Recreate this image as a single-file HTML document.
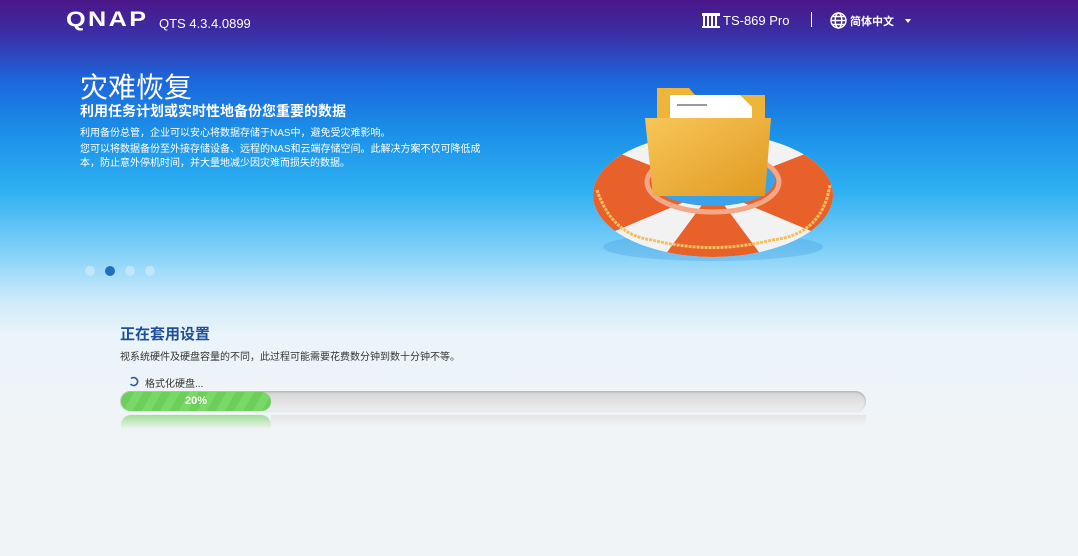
<!DOCTYPE html>
<html><head><meta charset="utf-8"><style>
*{margin:0;padding:0;box-sizing:border-box}
body{width:1078px;height:556px;overflow:hidden;position:relative;font-family:"Liberation Sans","Noto Sans CJK SC",sans-serif;
background:linear-gradient(180deg,#4b1688 0px,#3a2fa6 35px,#1c66dc 80px,#1b8ee8 130px,#2eb0f2 190px,#7fd0f8 250px,#cdeafb 300px,#eaf4fa 335px,#f0f4f7 420px,#f1f4f6 556px);}
.a{position:absolute;color:#fff;white-space:nowrap}
</style></head><body>
<div class="a" style="left:66px;top:8px;font:900 21px 'Liberation Sans',sans-serif;letter-spacing:2px;transform:scaleX(1.2);transform-origin:left">QNAP</div>
<div class="a" style="left:159px;top:16px;font-size:13px">QTS 4.3.4.0899</div>
<svg class="a" style="left:702px;top:13px" width="18" height="15" viewBox="0 0 18 15"><rect x="0" y="0" width="18" height="3" fill="#fff"/><rect x="1" y="3" width="2" height="12" fill="#fff"/><rect x="5" y="3" width="2" height="12" fill="#fff"/><rect x="9" y="3" width="2" height="12" fill="#fff"/><rect x="13" y="3" width="2" height="12" fill="#fff"/><rect x="0" y="13" width="18" height="2" fill="#fff"/></svg>
<div class="a" style="left:723px;top:13px;font-size:13px">TS-869 Pro</div>
<div class="a" style="left:811px;top:12px;width:1px;height:15px;background:#fff"></div>
<svg class="a" style="left:830px;top:12px" width="17" height="17" viewBox="0 0 17 17" fill="none" stroke="#fff" stroke-width="1.4"><circle cx="8.5" cy="8.5" r="7.5"/><ellipse cx="8.5" cy="8.5" rx="3.3" ry="7.5"/><path d="M1 8.5h15M2.5 4.5h12M2.5 12.5h12"/></svg>
<div class="a" style="left:850px;top:13px;font-size:11px;font-weight:bold">简体中文</div>
<div class="a" style="left:905px;top:19px;width:0;height:0;border-left:3.5px solid transparent;border-right:3.5px solid transparent;border-top:4px solid #fff"></div>

<div class="a" style="left:80px;top:66px;font-size:28px">灾难恢复</div>
<div class="a" style="left:80px;top:101px;font-size:14px;font-weight:bold">利用任务计划或实时性地备份您重要的数据</div>
<div class="a" style="left:80px;top:124px;font-size:10px">利用备份总管，企业可以安心将数据存储于NAS中，避免受灾难影响。</div>
<div class="a" style="left:80px;top:143px;font-size:10px;line-height:14px">您可以将数据备份至外接存储设备、远程的NAS和云端存储空间。此解决方案不仅可降低成<br>本，防止意外停机时间，并大量地减少因灾难而损失的数据。</div>

<svg class="a" style="left:585px;top:82px" width="260" height="185" viewBox="0 0 260 185">
<defs><linearGradient id="f" x1="0" y1="0" x2="1" y2="1"><stop offset="0" stop-color="#f8c65a"/><stop offset="1" stop-color="#e09a20"/></linearGradient>
<clipPath id="r"><path fill-rule="evenodd" d="M8 113a120 62 0 1 0 240 0a120 62 0 1 0-240 0zM66 98a62 28 0 1 0 124 0a62 28 0 1 0-124 0z"/></clipPath></defs>
<ellipse cx="128" cy="165" rx="110" ry="14" fill="#1a7fd0" opacity=".2"/>
<g clip-path="url(#r)">
<rect x="0" y="0" width="260" height="185" fill="#f2f2f2"/>
<path d="M128 108L-20 50L-20 170Z" fill="#e8602a"/>
<path d="M128 108L276 50L276 170Z" fill="#e8602a"/>
<path d="M128 108L60 200L196 200Z" fill="#e8602a"/>
<path d="M128 108L90 0L166 0Z" fill="#e8602a"/>
</g>
<ellipse cx="128" cy="100" rx="66" ry="30" fill="none" stroke="#f4a888" stroke-width="5"/>
<ellipse cx="128" cy="98" rx="62" ry="26" fill="#3aa2e8"/>
<path d="M12 108q15 45 55 50q60 15 120 0q50-5 58-55" fill="none" stroke="#f3c060" stroke-width="3" stroke-dasharray="3 1"/>
<path d="M72 6h32l6 7h70v60H72z" fill="#eeb53a"/>
<path d="M85 13h70l12 12v50H85z" fill="#fff"/>
<path d="M92 23h30" stroke="#999" stroke-width="2"/>
<path d="M60 36h126l-6 78H68z" fill="url(#f)"/>
</svg>

<div class="a" style="left:85px;top:266px;width:10px;height:10px;border-radius:50%;background:#bfe6fb"></div>
<div class="a" style="left:105px;top:266px;width:10px;height:10px;border-radius:50%;background:#1f6fc0"></div>
<div class="a" style="left:125px;top:266px;width:10px;height:10px;border-radius:50%;background:#bfe6fb"></div>
<div class="a" style="left:145px;top:266px;width:10px;height:10px;border-radius:50%;background:#bfe6fb"></div>

<div class="a" style="left:120px;top:323px;font-size:15px;font-weight:bold;color:#1d4f9a">正在套用设置</div>
<div class="a" style="left:120px;top:348px;font-size:10px;color:#333">视系统硬件及硬盘容量的不同，此过程可能需要花费数分钟到数十分钟不等。</div>
<svg class="a" style="left:129px;top:376px" width="11" height="11" viewBox="0 0 11 11"><path d="M2 2.5A4 4 0 1 1 1.5 8" fill="none" stroke="#2c5aa0" stroke-width="1.6"/></svg>
<div class="a" style="left:145px;top:375px;font-size:10px;color:#333">格式化硬盘...</div>
<div class="a" style="left:120px;top:391px;width:746px;height:21px;border-radius:11px;background:linear-gradient(#d4d4d4,#efefef);box-shadow:inset 0 1px 2px #aaa"></div>
<div class="a" style="left:121px;top:392px;width:150px;height:19px;border-radius:10px;background:repeating-linear-gradient(-60deg,#6ccf5a 0 8px,#7ad868 8px 16px);text-align:center;font-size:11px;font-weight:bold;line-height:19px;color:#fff">20%</div>
<div class="a" style="left:121px;top:415px;width:150px;height:14px;border-radius:10px 10px 0 0;background:linear-gradient(#8ed87e,rgba(240,244,247,0));opacity:.8"></div>
<div class="a" style="left:271px;top:415px;width:595px;height:12px;background:linear-gradient(#e4e4e4,rgba(240,244,247,0))"></div>
</body></html>
